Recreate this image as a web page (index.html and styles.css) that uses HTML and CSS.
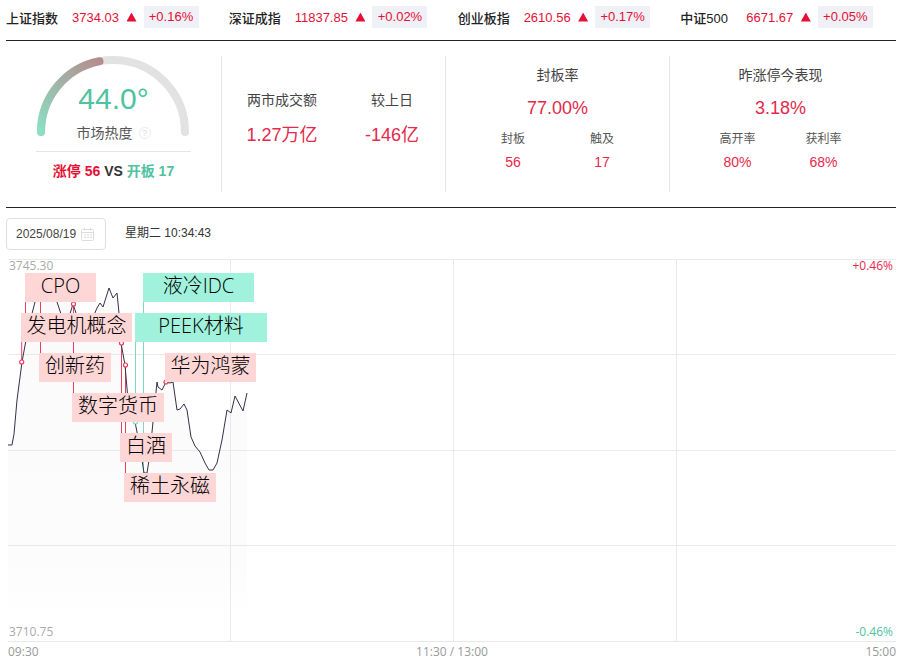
FILE: index.html
```html
<!DOCTYPE html>
<html lang="zh-CN">
<head>
<meta charset="utf-8">
<title>市场热度</title>
<link rel="stylesheet" href="styles.css">
</head>
<body>
<header class="ticker">
  <div class="tick"><span class="tick-name">上证指数</span><span class="tick-val">3734.03</span><i class="tri"></i><span class="pill">+0.16%</span></div>
  <div class="tick"><span class="tick-name">深证成指</span><span class="tick-val">11837.85</span><i class="tri"></i><span class="pill">+0.02%</span></div>
  <div class="tick"><span class="tick-name">创业板指</span><span class="tick-val">2610.56</span><i class="tri"></i><span class="pill">+0.17%</span></div>
  <div class="tick"><span class="tick-name">中证500</span><span class="tick-val">6671.67</span><i class="tri"></i><span class="pill">+0.05%</span></div>
</header>

<section class="stats">
  <div class="panel panel-gauge">
    <div class="gauge">
      <svg class="gauge-arc" width="155" height="95" viewBox="0 0 155 95">
        <defs>
          <linearGradient id="heat" gradientUnits="userSpaceOnUse" x1="5" y1="76" x2="70" y2="6">
            <stop offset="0" stop-color="#8adfc5"/>
            <stop offset="1" stop-color="#b68a8a"/>
          </linearGradient>
        </defs>
        <path d="M5 76A72 72 0 0 1 149 76" fill="none" stroke="#e2e2e2" stroke-width="8" stroke-linecap="round"/>
        <path d="M5 76A72 72 0 0 1 63.5 5.3" fill="none" stroke="url(#heat)" stroke-width="8" stroke-linecap="round"/>
      </svg>
      <div class="gauge-num">44.0°</div>
      <div class="gauge-label">市场热度<span class="help">?</span></div>
    </div>
    <div class="versus"><span class="up">涨停 56</span> VS <span class="green">开板 17</span></div>
  </div>

  <div class="panel panel-volume">
    <div class="vol-col"><div class="title">两市成交额</div><div class="big">1.27万亿</div></div>
    <div class="vol-col"><div class="title">较上日</div><div class="big">-146亿</div></div>
  </div>

  <div class="panel panel-rate">
    <div class="title">封板率</div>
    <div class="big big-main">77.00%</div>
    <div class="subs subs-a">
      <div><div class="sub-label">封板</div><div class="sub-val">56</div></div>
      <div><div class="sub-label">触及</div><div class="sub-val">17</div></div>
    </div>
  </div>

  <div class="panel panel-rate panel-last">
    <div class="title">昨涨停今表现</div>
    <div class="big big-main">3.18%</div>
    <div class="subs subs-b">
      <div><div class="sub-label">高开率</div><div class="sub-val">80%</div></div>
      <div><div class="sub-label">获利率</div><div class="sub-val">68%</div></div>
    </div>
  </div>
</section>

<div class="toolbar">
  <div class="date-box">
    <span>2025/08/19</span>
    <svg width="13" height="13" viewBox="0 0 13 13" fill="none" stroke="#dcdcdc" stroke-width="1">
      <rect x="0.5" y="1.5" width="12" height="11" rx="1"/>
      <path d="M0.5 4.5H12.5M3.5 0V2.5M9.5 0V2.5M3 7H5M6 7H8M9 7H11M3 9.5H5M6 9.5H8M9 9.5H11"/>
    </svg>
  </div>
  <div class="clock">星期二 10:34:43</div>
</div>

<main class="chart">
  <svg class="plot" width="888" height="383" viewBox="0 0 888 383">
    <defs>
      <linearGradient id="area" x1="0" y1="0" x2="0" y2="1">
        <stop offset="0" stop-color="#fafafa"/>
        <stop offset="0.85" stop-color="#fcfcfc"/>
        <stop offset="1" stop-color="#ffffff"/>
      </linearGradient>
    </defs>
    <path fill="url(#area)" d="M0 186H4L6 175L9 141L14 103L20 70L27 43L40 30L49 43L65 45L75 75L80 70L89 49L92 44L95 48L101 29L105 39L109 34L111 54L113 84L117 106L120 141L127 163L129 173L134 201L136 214L139 214L141 201L144 173L145 163L149 123L150 128L154 131L158 123L162 124L165 123L169 151L172 150L176 145L179 151L183 178L187 187L192 193L197 204L201 211L205 211L209 204L214 181L219 151L223 154L227 137L235 152L239 134V358H0Z"/>
    <g class="grid" fill="none" stroke="#e9e9e9">
      <path d="M0 .5H888M0 95.5H888M0 191.5H888M0 286.5H888M0 382.5H888M222.5 0V383M445.5 0V383M668.5 0V383"/>
    </g>
    <g fill="none" stroke-width="1">
      <path stroke="#e8405f" d="M17.500 43V54M32.500 43V100M65.500 45V134M13.700 83V103M113.500 84V174M117.500 106V214"/>
      <path stroke="#7fd9bf" d="M127.500 83V163M135.500 43V214"/>
    </g>
    <path fill="none" stroke="#33324a" stroke-width="1" d="M0 186H4L6 175L9 141L14 103L20 70L27 43L40 30L49 43L53 55L57 71L65 45L75 75L80 70L89 49L92 44L95 48L101 29L105 39L109 34L111 54L113 84L117 106L120 141L127 163L129 173L134 201L136 214L139 214L141 201L144 173L145 163L149 123L150 128L154 131L158 123L162 124L165 123L169 151L172 150L176 145L179 151L183 178L187 187L192 193L197 204L201 211L205 211L209 204L214 181L219 151L223 154L227 137L235 152L239 134"/>
    <g fill="#fff" stroke="#e8405f" stroke-width="1.200">
      <circle cx="13.700" cy="103" r="2"/>
      <circle cx="65.500" cy="45" r="2"/>
      <circle cx="113.500" cy="84" r="2"/>
      <circle cx="117.500" cy="106" r="2"/>
      <circle cx="158" cy="123" r="2"/>
    </g>
    <circle cx="127.500" cy="163" r="2" fill="#fff" stroke="#7fd9bf" stroke-width="1.200"/>
  </svg>
  <span class="tag tag-up" style="left:17px;top:14px;width:71px">CPO</span>
  <span class="tag tag-up" style="left:13px;top:54px;width:111px">发电机概念</span>
  <span class="tag tag-up" style="left:31px;top:94px;width:72px">创新药</span>
  <span class="tag tag-up" style="left:64px;top:134px;width:92px">数字货币</span>
  <span class="tag tag-up" style="left:112px;top:174px;width:52px">白酒</span>
  <span class="tag tag-up" style="left:116px;top:214px;width:92px">稀土永磁</span>
  <span class="tag tag-down" style="left:135px;top:14px;width:111px">液冷IDC</span>
  <span class="tag tag-down" style="left:127px;top:54px;width:132px">PEEK材料</span>
  <span class="tag tag-up" style="left:157px;top:94px;width:91px">华为鸿蒙</span>
  <span class="edge edge-hi">3745.30</span>
  <span class="edge edge-lo">3710.75</span>
  <span class="pct pct-hi">+0.46%</span>
  <span class="pct pct-lo">-0.46%</span>
</main>
<footer class="axis"><span>09:30</span><span>11:30 / 13:00</span><span>15:00</span></footer>
</body>
</html>
```
FILE: styles.css
```css
* { box-sizing: border-box; }
html, body { margin: 0; padding: 0; }
body {
  width: 901px;
  height: 667px;
  overflow: hidden;
  background: #fff;
  color: #333;
  font-family: "Liberation Sans", "Noto Sans CJK SC", sans-serif;
}
.ticker {
  margin: 0 5px 0 6px;
  height: 41px;
  padding-top: 6px;
  display: flex;
  align-items: flex-start;
  gap: 30.200px;
  border-bottom: 1px solid #222;
}
.tick { display: flex; align-items: center; height: 22px; font-size: 13px; }
.tick-name { width: 66px; font-weight: 500; color: #222; white-space: nowrap; }
.tick-val { color: #e60f35; margin-right: 7.500px; }
.tri {
  width: 10px;
  height: 9px;
  margin-right: 7px;
  background: #e60f35;
  clip-path: polygon(50% 0, 100% 100%, 0 100%);
}
.pill {
  height: 22px;
  width: 55px;
  line-height: 22px;
  text-align: center;
  background: #f0f1f6;
  color: #e60f35;
}
.stats {
  margin: 0 5px 0 6px;
  height: 167px;
  padding-top: 15px;
  display: flex;
  align-items: flex-start;
  border-bottom: 1px solid #222;
}
.panel { height: 136px; border-left: 1px solid #e4e4e4; }
.panel-gauge { width: 215px; height: 132px; border-left: 0; text-align: center; }
.gauge {
  position: relative;
  width: 155px;
  height: 96px;
  margin: 0 0 0 30px;
  padding-top: 25px;
  border-bottom: 1px solid #e5e5e5;
}
.gauge-arc { position: absolute; left: 0; top: 0; }
.gauge-num { position: relative; font-size: 30px; line-height: 36px; color: #4fc3a1; }
.gauge-label {
  position: relative;
  margin-top: 7px;
  font-size: 14px;
  line-height: 18px;
  color: #555;
  display: flex;
  justify-content: center;
  align-items: center;
}
.help {
  width: 12px;
  height: 12px;
  margin-left: 6px;
  border: 1px solid #ececec;
  border-radius: 50%;
  font-size: 9px;
  line-height: 10px;
  color: #ddd;
}
.versus { margin-top: 9px; font-size: 14px; line-height: 20px; font-weight: 700; color: #333; }
.up { color: #e60f35; }
.green { color: #4fc3a1; }
.panel-volume { width: 224px; display: grid; grid-template-columns: 110px 110px; justify-content: center; padding: 34px 0 0 7px; align-content: start; text-align: center; }
.panel-rate { width: 224px; padding-top: 9px; text-align: center; }
.panel-last { width: 222px; }
.title { font-size: 14px; line-height: 20px; color: #444; }
.big { font-size: 18px; line-height: 26px; color: #e6284b; margin-top: 12px; white-space: nowrap; }
.big-main { margin-top: 10px; }
.subs { display: grid; justify-content: center; margin-top: 9px; }
.subs-a { grid-template-columns: 89px 89px; }
.subs-b { grid-template-columns: 86px 86px; }
.sub-label { font-size: 12px; line-height: 18px; color: #555; }
.sub-val { margin-top: 4px; font-size: 14px; line-height: 20px; color: #e6284b; }
.toolbar { height: 51px; padding: 10px 0 0 6px; display: flex; align-items: flex-start; }
.date-box {
  width: 100px;
  height: 32px;
  border: 1px solid #dcdfe6;
  border-radius: 4px;
  padding-left: 9px;
  display: flex;
  align-items: center;
  gap: 5px;
  font-size: 12px;
  color: #444;
}
.clock { margin-left: 19px; font-size: 12px; line-height: 30px; color: #333; }
.chart { position: relative; width: 888px; height: 383px; margin-left: 8px; }
.plot { display: block; }
.tag {
  position: absolute;
  height: 29px;
  line-height: 25px;
  text-align: center;
  font-size: 20px;
  font-family: "Open Sans", "Noto Sans CJK SC", sans-serif;
  font-weight: 300;
  color: #000;
  white-space: nowrap;
}
.tag-up { background: #ffd6d6; }
.tag-down { background: #a0f2dc; }
.edge, .pct { position: absolute; font-size: 12px; line-height: 14px; font-family: "Open Sans", sans-serif; }
.edge { left: 1px; color: #aaa; }
.pct { right: 3px; }
.edge-hi, .pct-hi { top: 0; }
.edge-lo, .pct-lo { top: 366px; }
.pct-hi { color: #e6284b; }
.pct-lo { color: #4fc3a1; }
.axis {
  width: 888px;
  margin: 3px 0 0 8px;
  display: flex;
  justify-content: space-between;
  font-size: 12px;
  line-height: 14px;
  font-family: "Open Sans", sans-serif;
  color: #999;
}
```
